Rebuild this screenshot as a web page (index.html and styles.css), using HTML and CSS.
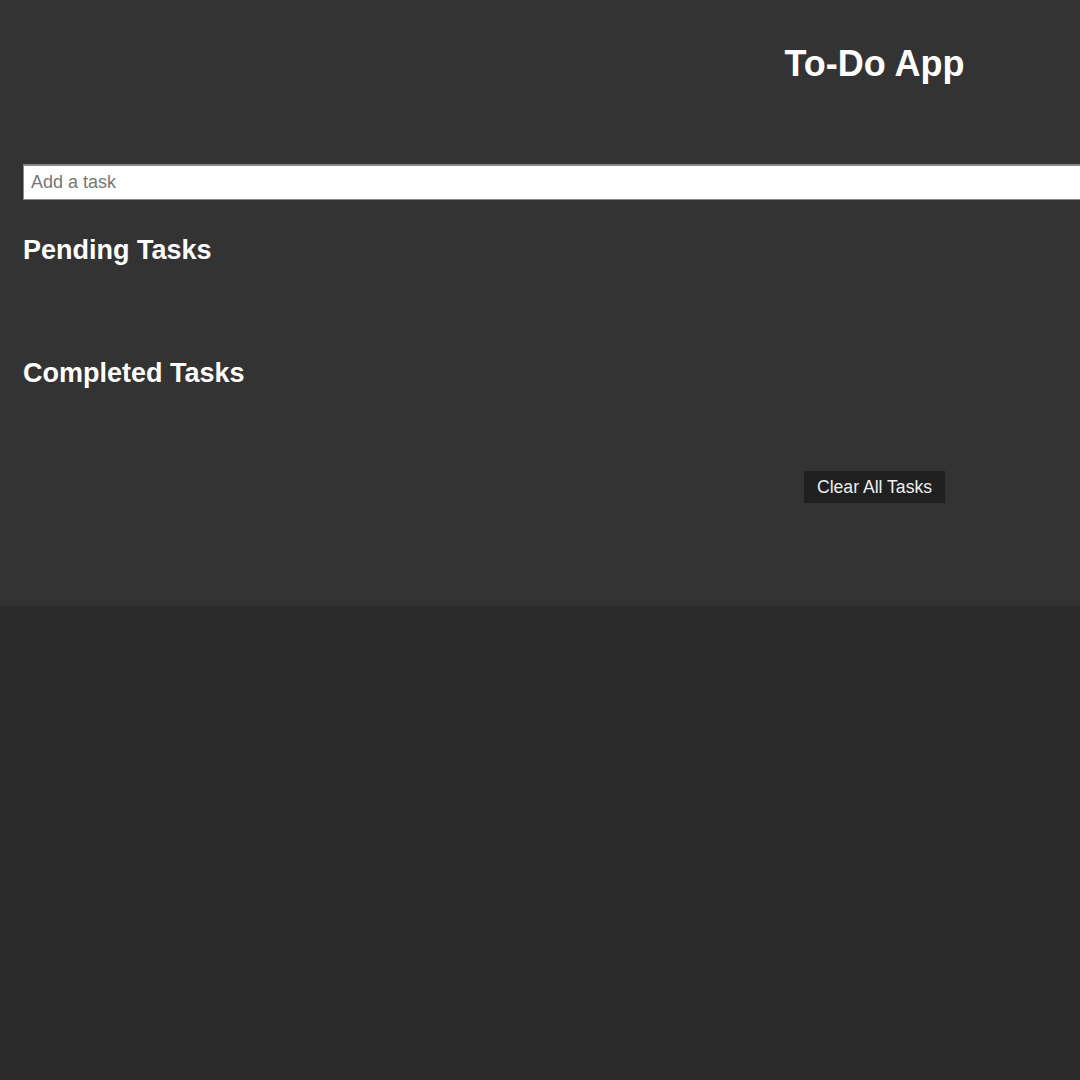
FILE: index.html
```html
<!DOCTYPE html>
<html>
<head>
<meta charset="utf-8">
<title>To-Do App</title>
<link rel="stylesheet" href="styles.css">
</head>
<body>
<div class="app">
  <h1 class="title">To-Do App</h1>
  <input class="task-input" type="text" placeholder="Add a task">
  <h2 class="section-title">Pending Tasks</h2>
  <ul class="task-list pending"></ul>
  <h2 class="section-title">Completed Tasks</h2>
  <ul class="task-list completed"></ul>
  <div class="actions">
    <button class="clear-btn">Clear All Tasks</button>
  </div>
</div>
</body>
</html>
```

FILE: styles.css
```css
html, body {
  margin: 0;
  padding: 0;
  overflow: hidden;
}
body {
  background: #2b2b2b;
  font-family: "Liberation Sans", Arial, sans-serif;
  color: #ffffff;
  height: 1080px;
}
.app {
  background: #333333;
  width: 1703px;
  padding: 44px 23px 103px 23px;
  display: flex;
  flex-direction: column;
}
.title {
  margin: 0;
  font-size: 36px;
  line-height: 40px;
  font-weight: bold;
  text-align: center;
}
.task-input {
  margin-top: 80px;
  box-sizing: border-box;
  width: 100%;
  height: 36px;
  padding: 0 7px;
  border: 1px solid #8a8a8a;
  border-top: 2px solid #8a8a8a;
  background: #ffffff;
  font-family: "Liberation Sans", Arial, sans-serif;
  font-size: 18px;
  color: #222;
  outline: none;
}
.task-input::placeholder {
  color: #767676;
}
.section-title {
  margin: 35px 0 0 0;
  font-size: 27px;
  line-height: 30px;
  font-weight: bold;
}
.task-list {
  list-style: none;
  margin: 0;
  padding: 0;
}
.task-list.pending {
  height: 93px;
}
.section-title + .task-list.pending + .section-title {
  margin-top: 0;
}
.task-list.completed {
  height: 83px;
}
.actions {
  display: flex;
  justify-content: center;
}
.clear-btn {
  background: #202020;
  color: #eeeeee;
  border: none;
  height: 32px;
  padding: 0 13px;
  font-family: "Liberation Sans", Arial, sans-serif;
  font-size: 17.6px;
  cursor: pointer;
}
```
